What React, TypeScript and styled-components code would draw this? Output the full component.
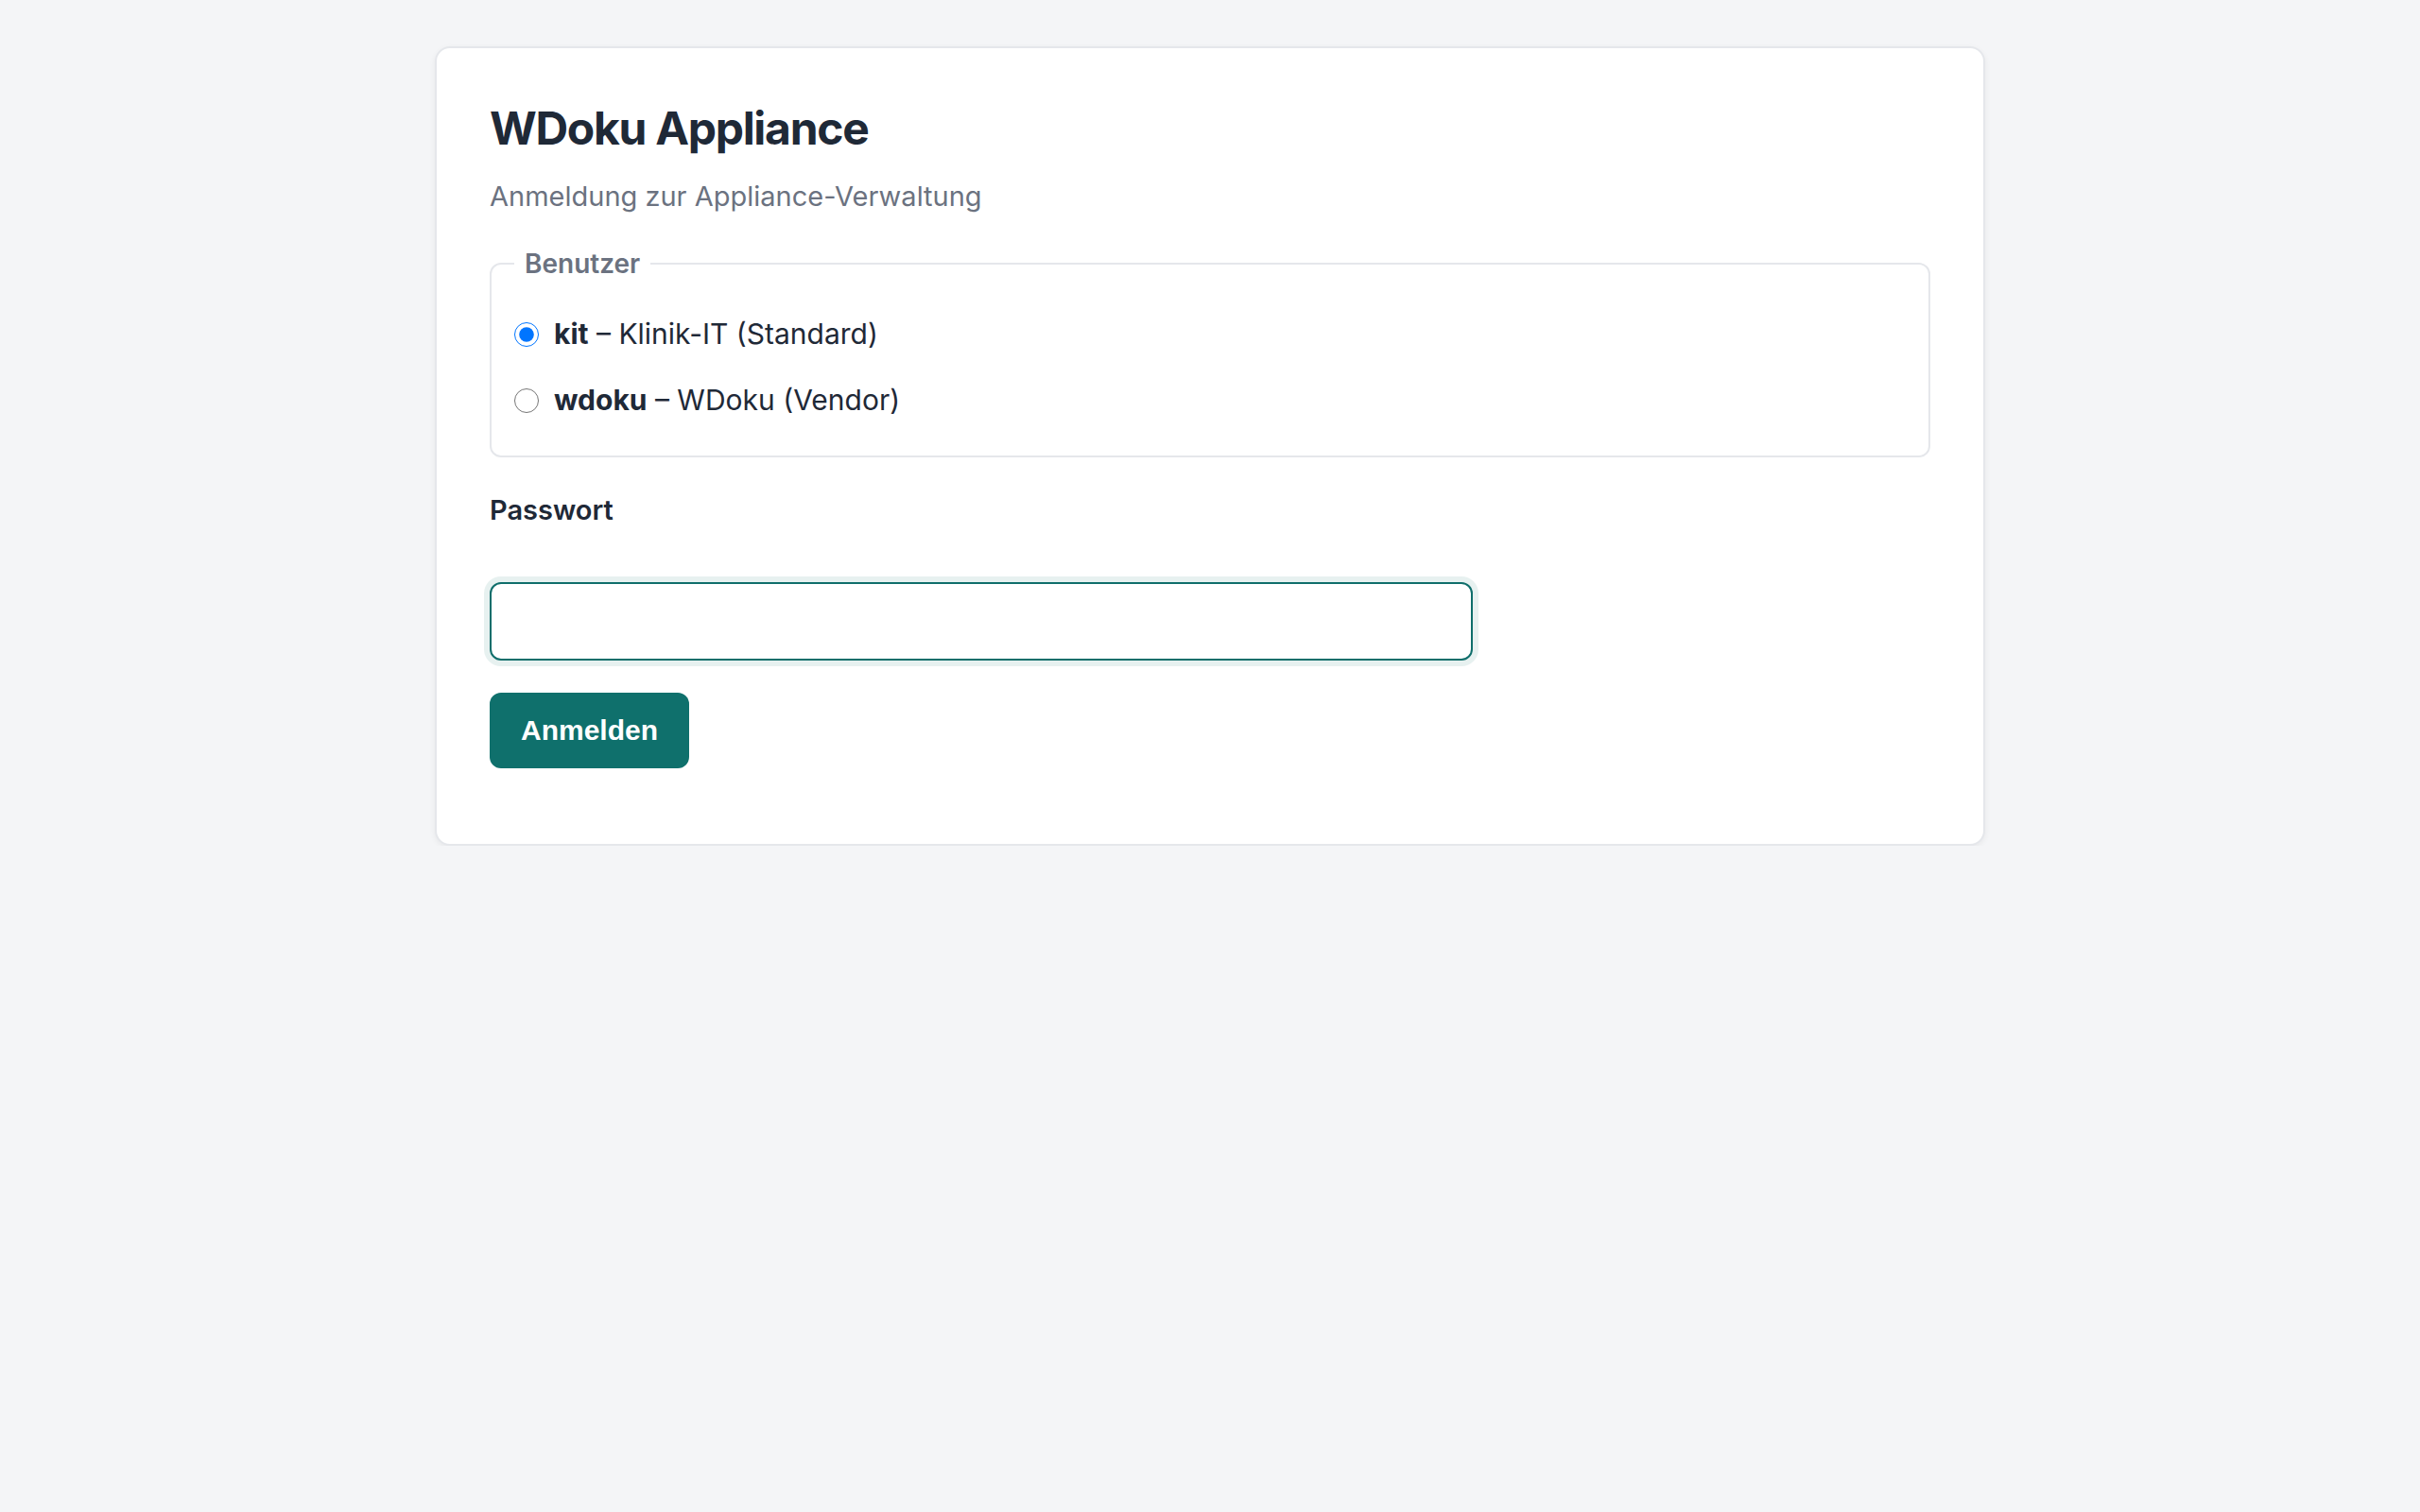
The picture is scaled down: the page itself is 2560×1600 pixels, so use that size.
import { useState } from 'react';
import styled, { createGlobalStyle } from 'styled-components';

const GlobalStyle = createGlobalStyle`
    html, body {
        margin : 0;
        padding : 0;
        background-color : #f4f5f7;
        font-family : Inter, 'Noto Sans', sans-serif;
        color : #1f2937;
    }
    * {
        box-sizing : border-box;
    }
`

const users = [
    { id : 'kit', desc : 'Klinik-IT (Standard)' },
    { id : 'wdoku', desc : 'WDoku (Vendor)' },
];

const App = () => {
    const [user, setUser] = useState('kit');
    const [password, setPassword] = useState('');

    return (
        <>
            <GlobalStyle />
            <StCard>
                <StTitle>WDoku Appliance</StTitle>
                <StSubtitle>Anmeldung zur Appliance-Verwaltung</StSubtitle>
                <StForm onSubmit={(e) => e.preventDefault()}>
                    <StFieldset>
                        <StLegend>Benutzer</StLegend>
                        {users.map((u) => (
                            <StRadioRow key={u.id}>
                                <StRadio
                                    type="radio"
                                    name="user"
                                    value={u.id}
                                    checked={user === u.id}
                                    onChange={() => setUser(u.id)}
                                />
                                <span><b>{u.id}</b> – {u.desc}</span>
                            </StRadioRow>
                        ))}
                    </StFieldset>
                    <StLabel htmlFor="pw">Passwort</StLabel>
                    <StInput
                        id="pw"
                        type="password"
                        value={password}
                        onChange={(e) => setPassword(e.target.value)}
                    />
                    <StButton type="submit">Anmelden</StButton>
                </StForm>
            </StCard>
        </>
    );
};

export default App;

const StCard = styled.div`
    max-width : 1640px;
    margin : 49px auto 0;
    padding : 56px 56px 56px;
    background-color : white;
    border : 2px solid #e5e7eb;
    border-radius : 16px;
    box-shadow : 0 2px 6px rgba(0, 0, 0, .06);
`

const StTitle = styled.h1`
    margin : 0;
    font-size : 48px;
    line-height : 1.2;
    font-weight : 700;
    letter-spacing : -1.3px;
    color : #1f2937;
`

const StSubtitle = styled.p`
    margin : 21px 0 0;
    font-size : 29px;
    line-height : 1.5;
    color : #6b7280;
`

const StForm = styled.form`
    display : flex;
    flex-direction : column;
    align-items : flex-start;
    margin-top : 29px;
    padding-bottom : 24px;
`

const StFieldset = styled.fieldset`
    width : 100%;
    margin : 0;
    padding : 31px 24px 36px;
    border : 2px solid #e5e7eb;
    border-radius : 12px;
    display : flex;
    flex-direction : column;
    gap : 25px;
`

const StLegend = styled.legend`
    padding : 0 11px;
    font-size : 28px;
    line-height : 1.5;
    font-weight : 600;
    color : #6b7280;
`

const StRadioRow = styled.label`
    display : flex;
    align-items : center;
    font-size : 30px;
    line-height : 1.5;
    color : #1f2937;
    cursor : pointer;
    b {
        font-weight : 700;
    }
`

const StRadio = styled.input`
    width : 26px;
    height : 26px;
    margin : 0 16px 0 0;
    cursor : pointer;
`

const StLabel = styled.label`
    margin-top : 34px;
    font-size : 29px;
    line-height : 1.5;
    font-weight : 600;
    color : #1f2937;
`

const StInput = styled.input`
    width : 1040px;
    height : 83px;
    margin-top : 54px;
    padding : 0 24px;
    font-size : 32px;
    border : 2px solid #0f6e6b;
    border-radius : 12px;
    box-shadow : 0 0 0 6px rgba(15, 118, 110, .1);
    outline : none;
`

const StButton = styled.button`
    margin-top : 34px;
    height : 80px;
    padding : 0 33px;
    border : none;
    border-radius : 12px;
    background-color : #0f706c;
    color : white;
    font-family : 'Liberation Sans', Arial, sans-serif;
    font-size : 30px;
    font-weight : 700;
    cursor : pointer;
    &:hover {
        background-color : #0d625e;
    }
`
